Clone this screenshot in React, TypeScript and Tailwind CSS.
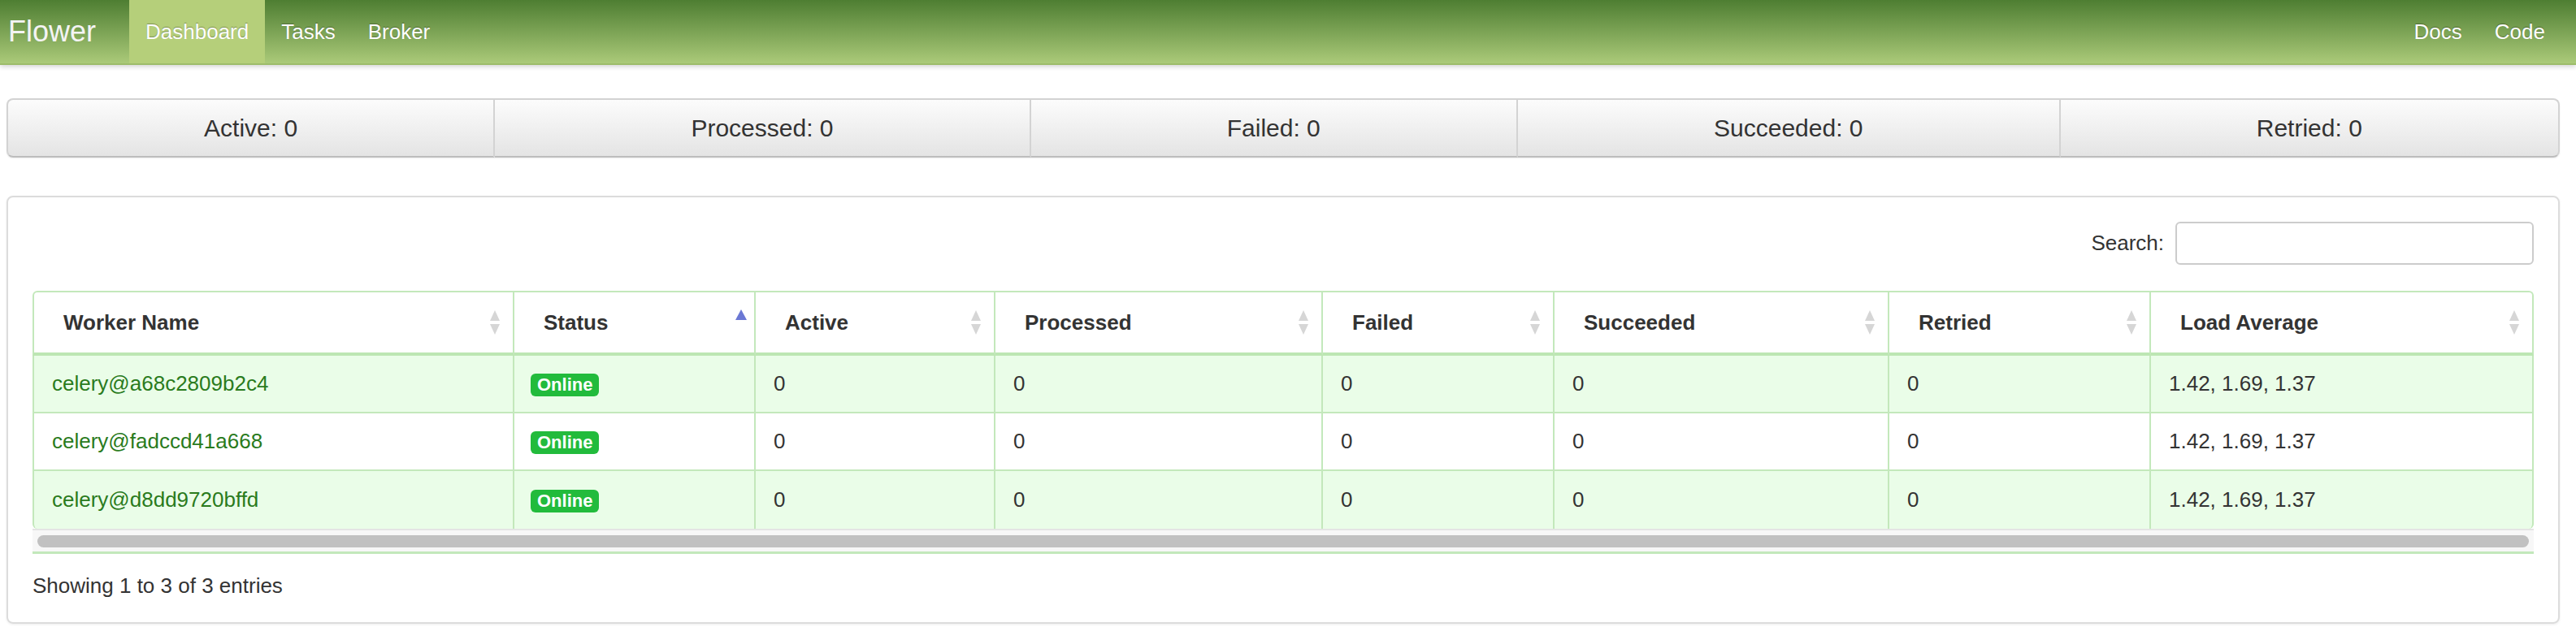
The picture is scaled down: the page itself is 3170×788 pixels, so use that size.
import React from "react";

const stats = ["Active: 0", "Processed: 0", "Failed: 0", "Succeeded: 0", "Retried: 0"];

const columns = [
  { name: "Worker Name", width: 593 },
  { name: "Status", width: 297, active: true },
  { name: "Active", width: 295 },
  { name: "Processed", width: 403 },
  { name: "Failed", width: 285 },
  { name: "Succeeded", width: 412 },
  { name: "Retried", width: 322 },
  { name: "Load Average", width: 471 },
];

const workers = ["celery@a68c2809b2c4", "celery@fadccd41a668", "celery@d8dd9720bffd"];

function SortIcon({ active }: { active?: boolean }) {
  if (active) {
    return (
      <svg width="14" height="13" viewBox="0 0 14 13" className="absolute right-[9px] top-[21px]">
        <path d="M7 0 L14 13 L0 13 Z" fill="#6b78d4" />
      </svg>
    );
  }
  return (
    <svg width="12" height="30" viewBox="0 0 12 30" className="absolute right-[16px] top-1/2 -translate-y-1/2">
      <path d="M6 0 L12 13 L0 13 Z" fill="#d6d6d6" />
      <path d="M0 17 L12 17 L6 30 Z" fill="#d6d6d6" />
    </svg>
  );
}

export default function App() {
  return (
    <div className="min-h-screen bg-white font-['Liberation_Sans',Arial,sans-serif] text-[#333]">
      <nav className="h-[80px] flex items-stretch bg-linear-to-b from-[#4e7e32] to-[#abca79] border-b-2 border-[#9dbc6a] shadow-[0_2px_6px_rgba(0,0,0,0.18)]">
        <div className="pl-[10px] pr-[41px] flex items-center text-[36px] text-[#f4f4f4]">Flower</div>
        <a className="px-[20px] flex items-center text-[26px] text-white bg-[#b5cf7a] [text-shadow:0_-1px_1px_rgba(0,0,0,0.3)]">Dashboard</a>
        <a className="px-[20px] flex items-center text-[26px] text-white [text-shadow:0_-1px_1px_rgba(0,0,0,0.3)]">Tasks</a>
        <a className="px-[20px] flex items-center text-[26px] text-white [text-shadow:0_-1px_1px_rgba(0,0,0,0.3)]">Broker</a>
        <div className="ml-auto mr-[18px] flex items-stretch">
          <a className="px-[20px] flex items-center text-[26px] text-white [text-shadow:0_-1px_1px_rgba(0,0,0,0.3)]">Docs</a>
          <a className="px-[20px] flex items-center text-[26px] text-white [text-shadow:0_-1px_1px_rgba(0,0,0,0.3)]">Code</a>
        </div>
      </nav>

      <div className="px-[8px] pt-[41px] pr-[20px]">
        <div className="flex h-[73px] shadow-[0_1px_2px_rgba(0,0,0,0.08)] rounded-[8px]">
          {stats.map((s, i) => (
            <div
              key={s}
              className={
                "flex-auto flex items-center justify-center text-[30px] text-[#333] bg-linear-to-b from-[#fcfcfc] to-[#e4e4e4] border-2 border-[#d3d3d3] border-b-[#bdbdbd] " +
                (i === 0 ? "rounded-l-[8px]" : "border-l-0") +
                (i === stats.length - 1 ? " rounded-r-[8px]" : "")
              }
            >
              {s}
            </div>
          ))}
        </div>

        <div className="mt-[47px] h-[527px] border-2 border-[#dcdcdc] rounded-[8px] shadow-[0_1px_3px_rgba(0,0,0,0.08)] px-[30px] pt-[30px]">
          <div className="flex items-center justify-end gap-[14px]">
            <span className="text-[26px]">Search:</span>
            <input className="w-[441px] h-[53px] border-2 border-[#cccccc] rounded-[6px] outline-none" />
          </div>

          <div className="mt-[32px] w-[3078px]">
            <table className="table-fixed border-separate border-spacing-0 w-[3078px]">
              <colgroup>
                {columns.map((c) => (
                  <col key={c.name} style={{ width: c.width }} />
                ))}
              </colgroup>
              <thead>
                <tr>
                  {columns.map((c, i) => (
                    <th
                      key={c.name}
                      className={
                        "relative h-[80px] text-left pl-[36px] text-[26px] font-bold text-[#333] bg-white border-t-2 border-r-2 border-b-4 border-t-[#c3e8bb] border-r-[#c3e8bb] border-b-[#bde6b3] " +
                        (i === 0 ? "border-l-2 border-l-[#c3e8bb] rounded-tl-[6px]" : "") +
                        (i === columns.length - 1 ? " rounded-tr-[6px]" : "")
                      }
                    >
                      {c.name}
                      <SortIcon active={c.active} />
                    </th>
                  ))}
                </tr>
              </thead>
              <tbody>
                {workers.map((w, r) => (
                  <tr key={w} className={r % 2 === 0 ? "bg-[#eafde8]" : "bg-white"}>
                    {columns.map((c, i) => {
                      let content: React.ReactNode = "0";
                      if (i === 0) content = <a className="text-[#2a7b1d]">{w}</a>;
                      if (i === 1)
                        content = (
                          <span className="inline-block px-[8px] h-[28px] leading-[28px] rounded-[6px] bg-[#22bb3c] text-white text-[22px] font-bold align-middle">
                            Online
                          </span>
                        );
                      if (i === 7) content = "1.42, 1.69, 1.37";
                      return (
                        <td
                          key={c.name}
                          className={
                            "h-[71px] text-[26px] text-[#333] border-r-2 border-r-[#c3e8bb] " +
                            (i === 1 ? "pl-[20px] " : "pl-[22px] ") +
                            (r < workers.length - 1 ? "border-b-2 border-b-[#c3e8bb] " : "") +
                            (i === 0 ? "border-l-2 border-l-[#c3e8bb]" : "") +
                            (r === workers.length - 1 && i === 0 ? " rounded-bl-[6px]" : "") +
                            (r === workers.length - 1 && i === columns.length - 1 ? " rounded-br-[6px] border-r-0" : "")
                          }
                        >
                          {content}
                        </td>
                      );
                    })}
                  </tr>
                ))}
              </tbody>
            </table>
            <div className="h-[28px] bg-[#f7f7f7] flex items-center px-[6px] border-t-2 border-[#e4e4e4]">
              <div className="h-[15px] flex-1 rounded-full bg-[#c1c1c1]" />
            </div>
            <div className="h-[3px] bg-[#c3e8bb]" />
          </div>

          <div className="mt-[20px] text-[26px]">Showing 1 to 3 of 3 entries</div>
        </div>
      </div>
    </div>
  );
}
